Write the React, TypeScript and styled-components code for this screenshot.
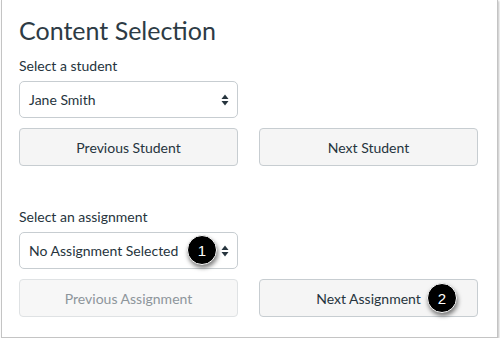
import React from "react";
import styled, { createGlobalStyle } from "styled-components";

const GlobalStyle = createGlobalStyle`
  html, body {
    margin: 0;
    padding: 0;
    background: #ffffff;
  }
  body {
    font-family: "Lato", "Liberation Sans", sans-serif;
    color: #2d3b45;
  }
`;

const Panel = styled.div`
  position: relative;
  box-sizing: border-box;
  width: 497px;
  height: 338px;
  margin-left: 1px;
  padding: 16px 17px 0 17px;
  background: #ffffff;
  border: 1px solid #c4c4c4;
  border-top: none;
  box-shadow: 1px 1px 2px rgba(0, 0, 0, 0.25);
`;

const Title = styled.h2`
  margin: 0 0 11px 0;
  font-size: 25px;
  font-weight: 400;
  line-height: 29px;
  color: #2d3b45;
`;

const Label = styled.div`
  font-size: 14px;
  line-height: 20px;
  margin-bottom: 5px;
  color: #26343d;
`;

const Column = styled.div`
  width: 219px;
`;

const SelectBox = styled.div`
  position: relative;
  box-sizing: border-box;
  display: flex;
  align-items: center;
  height: 37px;
  padding: 0 8px 0 9px;
  border: 1px solid #c7cdd1;
  border-radius: 5px;
  background: #ffffff;
  font-size: 14px;
  color: #26343d;
`;

const SelectText = styled.span`
  flex: 1;
`;

const ButtonRow = styled.div`
  display: grid;
  grid-template-columns: 219px 219px;
  column-gap: 21px;
  margin-top: 10px;
`;

const Button = styled.div<{ $disabled?: boolean }>`
  position: relative;
  box-sizing: border-box;
  height: 38px;
  display: flex;
  align-items: center;
  justify-content: center;
  border: 1px solid ${(p) => (p.$disabled ? "#dfe2e4" : "#c7cdd1")};
  border-radius: 4px;
  background: ${(p) => (p.$disabled ? "#f7f7f7" : "#f5f5f5")};
  color: ${(p) => (p.$disabled ? "#8d959b" : "#26343d")};
  font-size: 14px;
`;

const Spacer = styled.div`
  height: 41px;
`;

const Badge = styled.div<{ $left: number; $top: number }>`
  position: absolute;
  left: ${(p) => p.$left}px;
  top: ${(p) => p.$top}px;
  box-sizing: border-box;
  width: 30px;
  height: 30px;
  border-radius: 50%;
  background: #000000;
  border: 1px solid #ffffff;
  box-shadow: 1px 3px 4px rgba(0, 0, 0, 0.5);
  color: #ffffff;
  font-family: "Liberation Sans", Arial, sans-serif;
  font-size: 15px;
  display: flex;
  align-items: center;
  justify-content: center;
`;

const Arrows = () => (
  <svg width="8" height="12" viewBox="0 0 8 12">
    <path d="M4 0.5 L7.5 5 H0.5 Z" fill="#26343d" />
    <path d="M4 11.5 L7.5 7 H0.5 Z" fill="#26343d" />
  </svg>
);

export default function App() {
  return (
    <>
      <GlobalStyle />
      <Panel>
        <Title>Content Selection</Title>
        <Label>Select a student</Label>
        <Column>
          <SelectBox>
            <SelectText>Jane Smith</SelectText>
            <Arrows />
          </SelectBox>
        </Column>
        <ButtonRow>
          <Button>Previous Student</Button>
          <Button>Next Student</Button>
        </ButtonRow>
        <Spacer />
        <Label>Select an assignment</Label>
        <Column>
          <SelectBox>
            <SelectText>No Assignment Selected</SelectText>
            <Arrows />
            <Badge $left={167} $top={2}>1</Badge>
          </SelectBox>
        </Column>
        <ButtonRow>
          <Button $disabled>Previous Assignment</Button>
          <Button>
            Next Assignment
            <Badge $left={167} $top={3}>2</Badge>
          </Button>
        </ButtonRow>
      </Panel>
    </>
  );
}
